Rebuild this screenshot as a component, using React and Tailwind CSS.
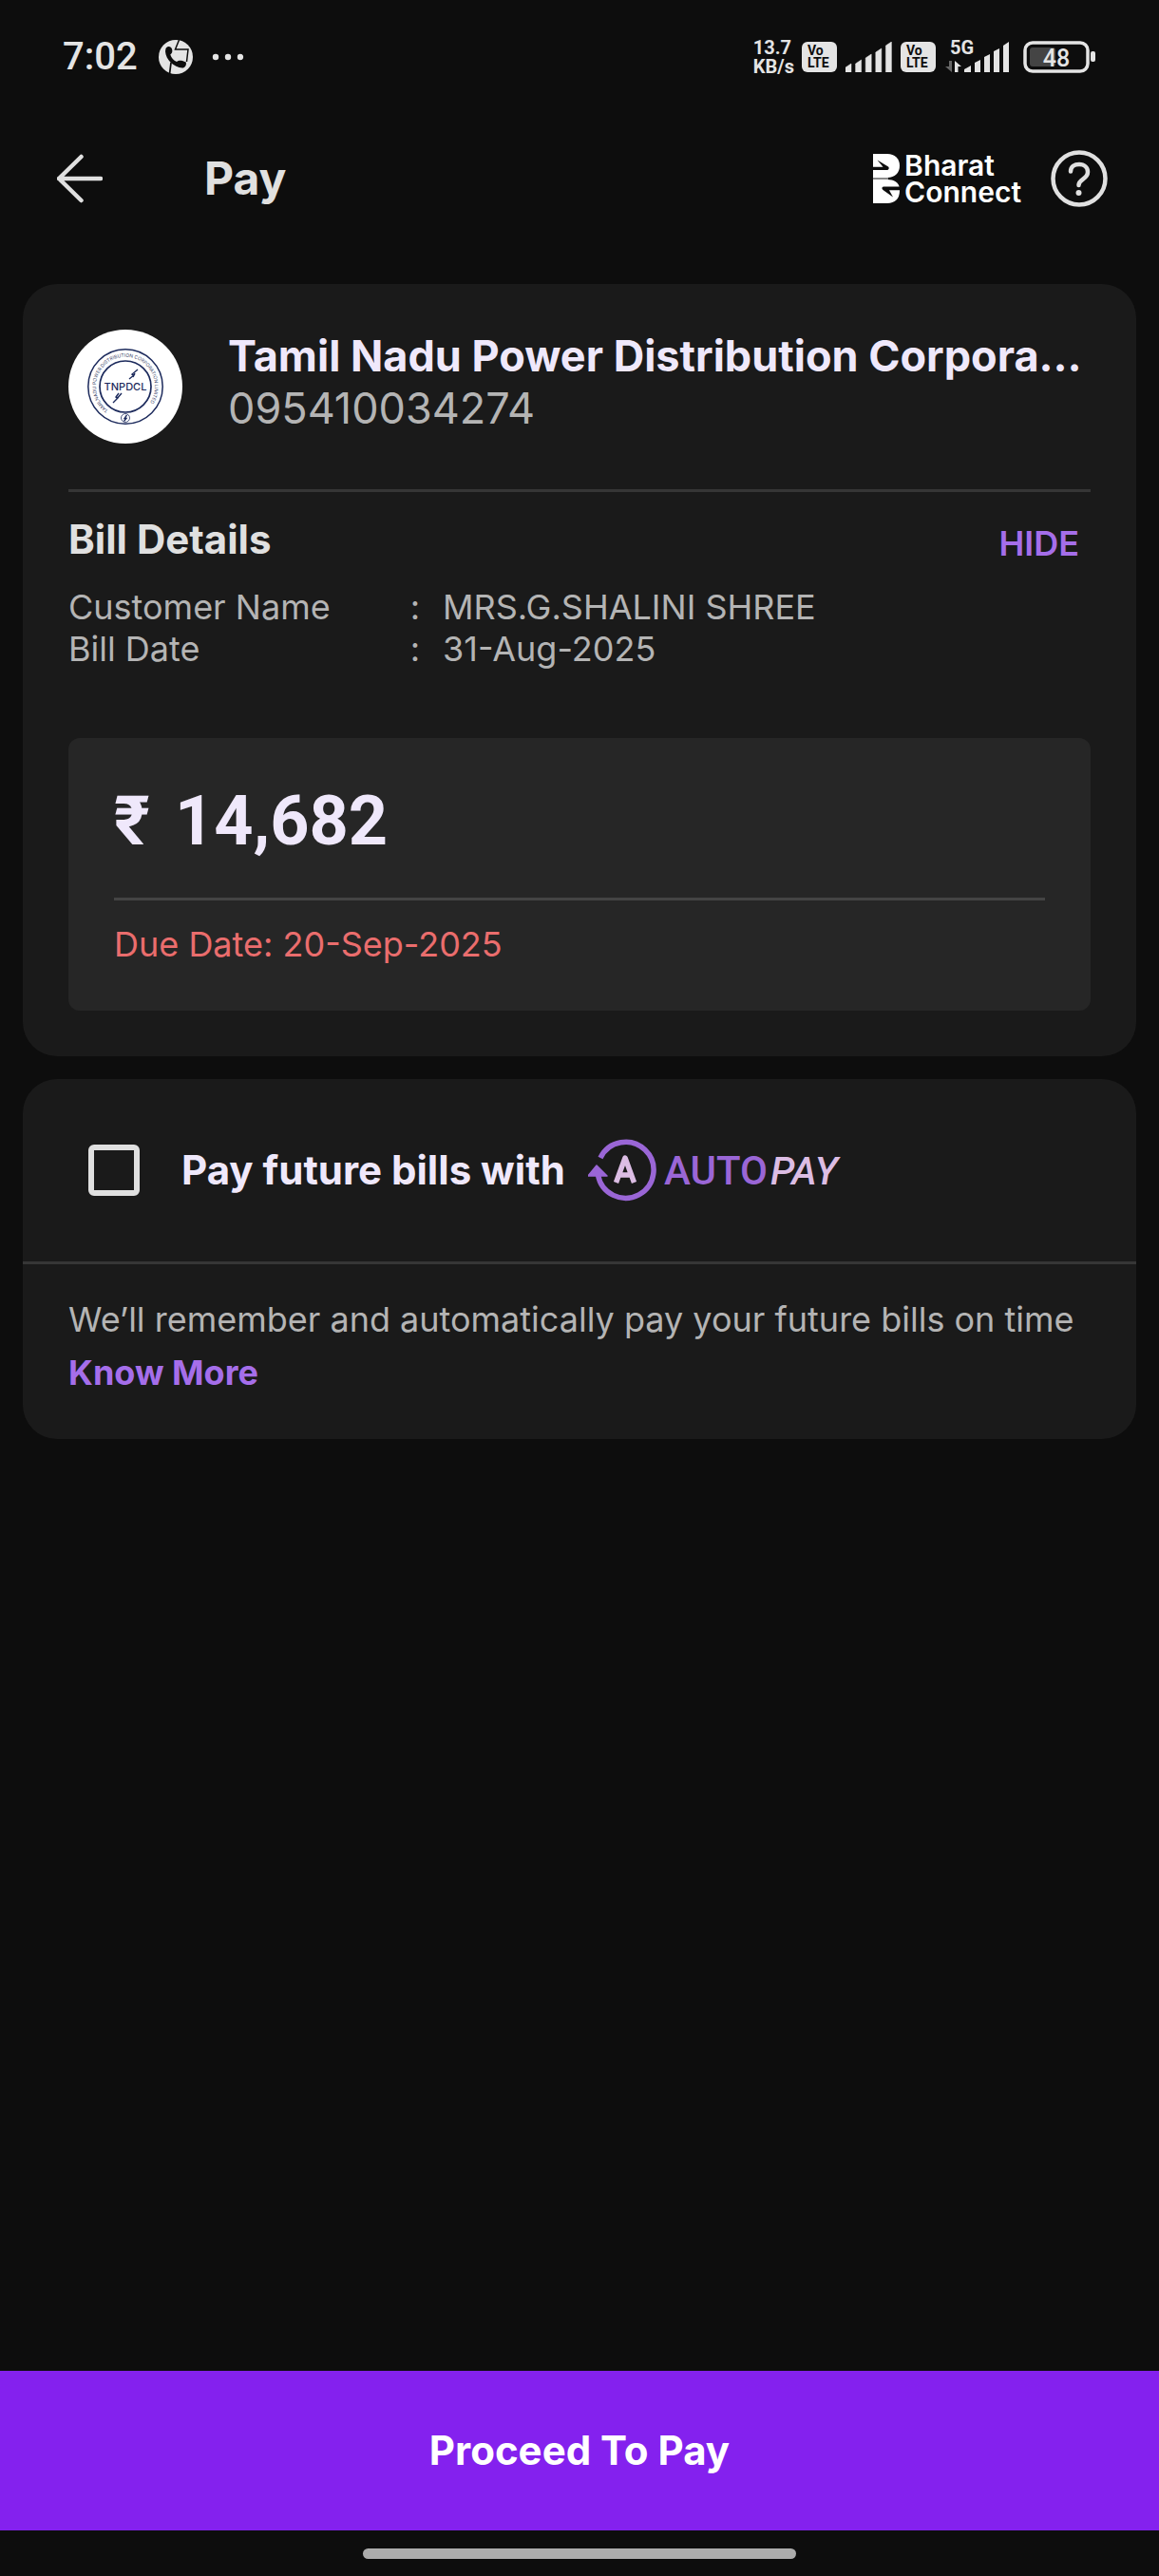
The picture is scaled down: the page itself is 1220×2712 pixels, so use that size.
import React, { useState } from "react";

const signalHeights = [9, 13, 19, 25, 32];

function CallIcon() {
  return (
    <svg viewBox="0 0 36 36" className="size-9" aria-hidden="true">
      <circle cx="18" cy="18" r="18" fill="#e4e4e4" />
      <path d="M21.500 0 L17.500 10 H31 L29.500 23" fill="none" stroke="#0d0d0d" strokeWidth="1.500" />
      <path d="M13 24 L11.500 36" fill="none" stroke="#0d0d0d" strokeWidth="1.800" />
      <path
        d="M7.500 9 C9.500 6 13 6.500 14 9.500 C14.800 12 14.300 14 12.300 15.500 C13.500 19 15.500 21.500 19 23 C20.500 21.500 23 21.500 25 22 L28.800 23.500 C29.500 27 27.500 29.500 25 29.500 C16 29 7.500 21 7 12 Z"
        fill="#0d0d0d"
      />
    </svg>
  );
}

function VoLte() {
  return (
    <div className="flex h-8 w-[37px] flex-col justify-center rounded-md bg-[#e4e4e4] pl-[6px] font-['Roboto',sans-serif] text-[14px] leading-[13px] font-bold text-[#0d0d0d]">
      <span>Vo</span>
      <span>LTE</span>
    </div>
  );
}

function SignalBars() {
  return (
    <svg viewBox="0 0 49 32" className="h-8 w-[49px]" aria-hidden="true">
      {signalHeights.map((h, i) => (
        <path
          key={h}
          d={`M${i * 10.600} 32 V${32 - h + 4} L${i * 10.600 + 6} ${32 - h} V32 Z`}
          fill="#e4e4e4"
          stroke="#e4e4e4"
          strokeWidth="0.500"
        />
      ))}
    </svg>
  );
}

function FiveG() {
  return (
    <svg viewBox="0 0 68 36" className="h-9 w-[68px] overflow-visible" role="img" aria-label="5G signal">
      <text x="5" y="15" fontFamily="Roboto, sans-serif" fontWeight="700" fontSize="20" fill="#e4e4e4">
        5G
      </text>
      <path d="M7 22 V34 L0 28 H4 V22 Z" fill="#666" />
      <path d="M10 34 V22 L17 28 H13.500 V34 Z" fill="#e4e4e4" />
      <path d="M20 34 V31 L27 27 V34 Z" fill="#e4e4e4" />
      <path d="M31 34 V24 L37 21 V34 Z" fill="#e4e4e4" />
      <path d="M41 34 V18 L47 15 V34 Z" fill="#e4e4e4" />
      <path d="M51 34 V12 L57 9 V34 Z" fill="#e4e4e4" />
      <path d="M61 34 V6 L67 2 V34 Z" fill="#e4e4e4" />
    </svg>
  );
}

function Battery() {
  return (
    <svg viewBox="0 0 77 34" className="h-[34px] w-[77px]" role="img" aria-label="Battery 48 percent">
      <rect x="2" y="2" width="66" height="30" rx="8" fill="none" stroke="#e4e4e4" strokeWidth="3.500" />
      <rect x="7" y="7" width="27" height="20" rx="3" fill="#444" />
      <rect x="71" y="11" width="5" height="11" rx="2" fill="#e4e4e4" />
      <text x="35" y="27" textAnchor="middle" fontFamily="Roboto, sans-serif" fontWeight="500" fontSize="25" fill="#e4e4e4">
        48
      </text>
    </svg>
  );
}

function StatusBar() {
  return (
    <div className="flex h-[120px] items-center justify-between px-[66px] font-['Roboto',sans-serif] text-[#e4e4e4]">
      <div className="flex items-center">
        <span className="text-[40px] leading-[44px] font-medium">7:02</span>
        <span className="ml-[22px]">
          <CallIcon />
        </span>
        <svg viewBox="0 0 34 8" className="ml-5 h-2 w-[34px]" aria-hidden="true">
          <circle cx="4" cy="4" r="3.200" fill="#e4e4e4" />
          <circle cx="17" cy="4" r="3.200" fill="#e4e4e4" />
          <circle cx="30" cy="4" r="3.200" fill="#e4e4e4" />
        </svg>
      </div>
      <div className="flex items-center">
        <div className="mr-2 flex flex-col text-[20px] leading-5 font-bold">
          <span>13.7</span>
          <span>KB/s</span>
        </div>
        <VoLte />
        <div className="mx-[9px]">
          <SignalBars />
        </div>
        <VoLte />
        <div className="mr-[14px] ml-[10px]">
          <FiveG />
        </div>
        <Battery />
      </div>
    </div>
  );
}

function BharatConnect() {
  return (
    <div className="flex items-center gap-[5px] text-white">
      <svg viewBox="0 0 28 52" className="h-[52px] w-7" aria-hidden="true">
        <path d="M0 0 H15 C23 0 28 5 28 12.500 C28 20 23 25 15 25 H0 Z" fill="#fff" />
        <path d="M0 25 H16 V27 H0 Z" fill="#8a8a8a" />
        <path d="M0 27 H15 C22 27 27 30 28 36 V39 C28 47 23 52 15 52 H0 Z" fill="#fff" />
        <path d="M0 13.800 H10.500 L4.500 6.500 L16 13.500 C17.500 15 16.500 17 14.500 17 H0 Z" fill="#0d0d0d" />
        <path d="M28 34.500 H11 C9 35 9 37 10.500 38 L21 45.500 L17 38.200 H28 Z" fill="#0d0d0d" />
      </svg>
      <div className="flex flex-col text-[30px] leading-7 font-semibold">
        <span>Bharat</span>
        <span>Connect</span>
      </div>
    </div>
  );
}

function Header() {
  return (
    <header className="flex h-[136px] items-center pr-[54px] pl-[60px]">
      <button type="button" aria-label="Back" className="shrink-0">
        <svg viewBox="0 0 48 52" className="h-[52px] w-12" fill="none" stroke="#e0e0e0" strokeWidth="4.500" strokeLinecap="round" strokeLinejoin="round">
          <path d="M25.500 3 L2 26 L25.500 49 M2 26 H46" />
        </svg>
      </button>
      <h1 className="ml-[107px] flex-1 text-[48px] leading-[60px] font-bold text-[#e0e0e0]">Pay</h1>
      <BharatConnect />
      <button type="button" aria-label="Help" className="ml-[31px] shrink-0">
        <svg viewBox="0 0 60 60" className="size-[60px]" fill="none" stroke="#e0e0e0" strokeWidth="4.500" strokeLinecap="round" strokeLinejoin="round">
          <circle cx="30" cy="30" r="27.500" />
          <path d="M21 22.500 C21 17.500 25 15 30 15 C35.500 15 39 18.500 39 23 C39 31 29.500 30 29.500 37" />
          <circle cx="29.500" cy="45" r="3" fill="#e0e0e0" stroke="none" />
        </svg>
      </button>
    </header>
  );
}

function BillerLogo() {
  return (
    <svg viewBox="0 0 120 120" className="size-[120px] shrink-0" role="img" aria-label="TNPDCL">
      <defs>
        <path id="seal-ring" d="M42 85 A31 31 0 1 1 78 85" />
      </defs>
      <circle cx="60" cy="60" r="60" fill="#fff" />
      <circle cx="60" cy="60" r="39.200" fill="none" stroke="#1c2a5c" strokeWidth="1.500" />
      <circle cx="60" cy="60" r="27" fill="none" stroke="#1c2a5c" strokeWidth="1.700" />
      <text fontFamily="Inter, sans-serif" fontSize="5" fill="#3a456b">
        <textPath href="#seal-ring">TAMILNADU POWER DISTRIBUTION CORPORATION LIMITED</textPath>
      </text>
      <text x="60" y="63.500" textAnchor="middle" fontFamily="Inter, sans-serif" fontWeight="500" fontSize="11" fill="#1c2a5c">
        TNPDCL
      </text>
      <path d="M73 42 L67 47 L69 48 L64 52 M70 46 L68 50 M53 67 L50 71 L52 72 L47 77 M56 67 L50 74" fill="none" stroke="#1c2a5c" strokeWidth="1.400" />
      <circle cx="60" cy="93" r="4.500" fill="#fff" stroke="#1c2a5c" strokeWidth="0.800" />
      <path d="M61.500 90 L59 93.500 H61 L58.500 96.500" fill="none" stroke="#1c2a5c" strokeWidth="1.300" />
    </svg>
  );
}

const details = [
  ["Customer Name", "MRS.G.SHALINI SHREE"],
  ["Bill Date", "31-Aug-2025"],
];

function BillCard() {
  const [open, setOpen] = useState(true);
  return (
    <section className="rounded-[36px] bg-[#1a1a1a] p-12">
      <div className="flex gap-12 pb-12">
        <BillerLogo />
        <div className="min-w-0 flex-1">
          <h2 className="truncate text-[45px] leading-[56px] font-bold text-[#efe8fb]">
            Tamil Nadu Power Distribution Corporation Limited
          </h2>
          <p className="text-[45px] leading-[54px] text-[#b4b4b4]">095410034274</p>
        </div>
      </div>
      <div className="flex items-center justify-between border-t-3 border-[#363636] pt-6 pr-3 pb-[23px]">
        <h3 className="text-[42px] leading-[52px] font-bold text-[#e0e0e0]">Bill Details</h3>
        <button type="button" onClick={() => setOpen(!open)} className="pt-2 text-[36px] leading-[44px] font-semibold text-[#a56eea]">
          {open ? "HIDE" : "SHOW"}
        </button>
      </div>
      {open && (
        <dl className="text-[36px] leading-[44px] text-[#b4b4b4]">
          {details.map(([label, value]) => (
            <div key={label} className="flex">
              <dt className="flex w-[394px] pr-6">
                <span className="flex-1">{label}</span>
                <span>:</span>
              </dt>
              <dd>{value}</dd>
            </div>
          ))}
        </dl>
      )}
      <div className="mt-[72px] rounded-xl bg-[#262626] p-12">
        <p className="flex gap-[26px] font-['Roboto',sans-serif] text-[72px] leading-[80px] font-bold text-[#efe8fb]">
          <span>₹</span>
          <span>14,682</span>
        </p>
        <p className="mt-10 border-t-3 border-[#444444] pt-6 text-[36px] leading-[44px] text-[#ea6d6d]">
          Due Date: 20-Sep-2025
        </p>
      </div>
    </section>
  );
}

function AutoPayLogo() {
  return (
    <svg viewBox="0 0 268 66" className="h-[66px] w-[268px]" role="img" aria-label="AUTOPAY">
      <path d="M13 20 A29.500 29.500 0 1 1 10.500 38" fill="none" stroke="#9a66d6" strokeWidth="5.500" />
      <path d="M9 28 L20 39 H0 Z" fill="#9a66d6" stroke="#9a66d6" strokeWidth="1.500" strokeLinejoin="round" />
      <path d="M29.500 46 L39 20 L48.500 46 M33 38 H45.500" fill="none" stroke="#dcbde4" strokeWidth="5.500" strokeLinejoin="round" />
      <text x="80" y="48" fontFamily="Roboto, sans-serif" fontSize="42" fontWeight="500" fill="#9a66d6">
        AUTO
      </text>
      <text x="192" y="48" fontFamily="Roboto, sans-serif" fontSize="41" fontStyle="italic" fontWeight="500" fill="#dcbde4">
        PAY
      </text>
    </svg>
  );
}

function AutoPayCard() {
  return (
    <section className="overflow-hidden rounded-[36px] bg-[#1a1a1a]">
      <label className="flex h-48 items-center pl-[69px]">
        <input
          type="checkbox"
          className="size-[54px] shrink-0 appearance-none rounded-md border-6 border-[#e0e0e0] checked:bg-[#8421ee]"
        />
        <span className="ml-11 text-[42px] leading-[52px] font-bold text-[#efe8fb]">Pay future bills with</span>
        <span className="ml-6">
          <AutoPayLogo />
        </span>
      </label>
      <div className="border-t-3 border-[#363636] px-12 pt-[30px] pb-[42px] text-[36px] leading-[56px]">
        <p className="text-[#b4b4b4]">We’ll remember and automatically pay your future bills on time</p>
        <a href="#know-more" className="block font-bold text-[#a56eea]">
          Know More
        </a>
      </div>
    </section>
  );
}

export default function App() {
  return (
    <div className="flex min-h-screen flex-col bg-[#0d0d0d] font-['Inter',sans-serif]">
      <StatusBar />
      <Header />
      <main className="flex flex-1 flex-col gap-6 px-6 pt-[43px] pb-6">
        <BillCard />
        <AutoPayCard />
      </main>
      <button type="button" className="h-[168px] w-full bg-[#8421ee] text-[42px] leading-[52px] font-bold text-white">
        Proceed To Pay
      </button>
      <div className="flex h-12 items-center justify-center">
        <div className="h-[11px] w-[456px] rounded-full bg-[#acacac]" />
      </div>
    </div>
  );
}
